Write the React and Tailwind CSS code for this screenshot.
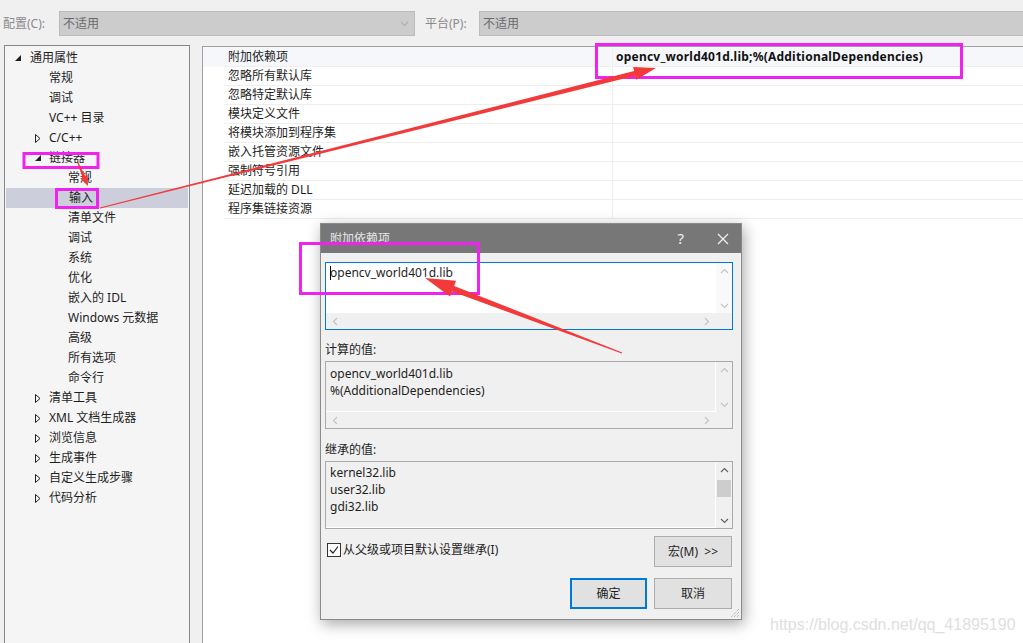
import React from "react";

const FONT = "font-['Noto_Sans','Noto_Sans_CJK_SC',sans-serif]";

function ExpTri() {
  return (
    <svg width="6" height="6" viewBox="0 0 6 6" className="block">
      <polygon points="6,0 6,6 0,6" fill="#1e1e1e" />
    </svg>
  );
}
function ColTri() {
  return (
    <svg width="6" height="9" viewBox="0 0 6 9" className="block">
      <polygon points="0.5,0.5 5,4.5 0.5,8.5" fill="none" stroke="#1e1e1e" strokeWidth="1" />
    </svg>
  );
}

function Chev({ dir, color = "#c2c2c2" }) {
  const pts = {
    up: "1,6 4.5,2.5 8,6",
    down: "1,3 4.5,6.5 8,3",
    left: "6,1 2.5,4.5 6,8",
    right: "3,1 6.5,4.5 3,8",
  }[dir];
  return (
    <svg width="9" height="9" viewBox="0 0 9 9" className="block">
      <polyline points={pts} fill="none" stroke={color} strokeWidth="1.1" />
    </svg>
  );
}

const tree = [
  { t: "通用属性", l: 0, s: "e" },
  { t: "常规", l: 1 },
  { t: "调试", l: 1 },
  { t: "VC++ 目录", l: 1 },
  { t: "C/C++", l: 1, s: "c" },
  { t: "链接器", l: 1, s: "e" },
  { t: "常规", l: 2 },
  { t: "输入", l: 2, sel: true },
  { t: "清单文件", l: 2 },
  { t: "调试", l: 2 },
  { t: "系统", l: 2 },
  { t: "优化", l: 2 },
  { t: "嵌入的 IDL", l: 2 },
  { t: "Windows 元数据", l: 2 },
  { t: "高级", l: 2 },
  { t: "所有选项", l: 2 },
  { t: "命令行", l: 2 },
  { t: "清单工具", l: 1, s: "c" },
  { t: "XML 文档生成器", l: 1, s: "c" },
  { t: "浏览信息", l: 1, s: "c" },
  { t: "生成事件", l: 1, s: "c" },
  { t: "自定义生成步骤", l: 1, s: "c" },
  { t: "代码分析", l: 1, s: "c" },
];

const props = [
  "附加依赖项",
  "忽略所有默认库",
  "忽略特定默认库",
  "模块定义文件",
  "将模块添加到程序集",
  "嵌入托管资源文件",
  "强制符号引用",
  "延迟加载的 DLL",
  "程序集链接资源",
];

function TreeRow({ item }) {
  const indent = item.l === 0 ? "pl-[10px]" : item.l === 1 ? "pl-[30px]" : "pl-[63px]";
  const tri = item.l === 0 ? "w-[15px]" : "w-[14px]";
  return (
    <div
      className={`flex items-center h-[20px] ${indent} ${
        item.sel ? "bg-[#cccedb] mx-[1px] pl-[62px]" : ""
      }`}
    >
      {item.l < 2 && (
        <div className={`${tri} flex items-center`}>
          {item.s === "e" && <ExpTri />}
          {item.s === "c" && <ColTri />}
        </div>
      )}
      <span className="text-[12px] leading-[20px] text-[#1e1e1e] whitespace-nowrap">{item.t}</span>
    </div>
  );
}

function arrowPoly(x1, y1, x2, y2, w0, w1, hl, hw) {
  const dx = x2 - x1,
    dy = y2 - y1;
  const len = Math.hypot(dx, dy);
  const ux = dx / len,
    uy = dy / len;
  const nx = -uy,
    ny = ux;
  const bx = x2 - ux * hl,
    by = y2 - uy * hl;
  const p = [
    [x1 + (nx * w0) / 2, y1 + (ny * w0) / 2],
    [bx + (nx * w1) / 2, by + (ny * w1) / 2],
    [bx + (nx * hw) / 2, by + (ny * hw) / 2],
    [x2, y2],
    [bx - (nx * hw) / 2, by - (ny * hw) / 2],
    [bx - (nx * w1) / 2, by - (ny * w1) / 2],
    [x1 - (nx * w0) / 2, y1 - (ny * w0) / 2],
  ];
  return p.map((q) => q[0].toFixed(1) + "," + q[1].toFixed(1)).join(" ");
}

function ScrollBox({ lines, white, hscroll = true, thumb, border = "border-[#a9a9a9]", pt = "pt-[2px]", arrowColor = "#c2c2c2" }) {
  return (
    <div
      className={`grid grid-cols-[1fr_16px] ${hscroll ? "grid-rows-[1fr_16px]" : "grid-rows-[1fr]"} border ${border} h-[68px] bg-[#f0f0f0]`}
    >
      <div className={`${white ? "bg-white" : "bg-[#f0f0f0] border-r border-b border-white"} pl-[4px] ${pt}`}>
        {lines.map((l, i) => (
          <div key={i} className="text-[12px] leading-[17px] text-[#1e1e1e] whitespace-nowrap">
            {l}
          </div>
        ))}
      </div>
      <div className={`flex flex-col ${white ? "bg-[#f7f7f7]" : "bg-[#f0f0f0]"}`}>
        <div className="h-[16px] flex items-center justify-center">
          <Chev dir="up" color={arrowColor} />
        </div>
        {thumb ? <div className="mt-[2px] h-[17px] mx-[1px] bg-[#cdcdcd]" /> : null}
        <div className="flex-1" />
        <div className="h-[16px] flex items-center justify-center">
          <Chev dir="down" color={arrowColor} />
        </div>
      </div>
      {hscroll && (
        <>
          <div className="flex items-center justify-between px-[5px] bg-[#f0f0f0]">
            <Chev dir="left" />
            <Chev dir="right" />
          </div>
          <div className="bg-[#f0f0f0]" />
        </>
      )}
    </div>
  );
}

export default function App() {
  const mag = "#f022f0";
  const red = "#f23a3a";
  return (
    <div className={`relative w-[1023px] h-[643px] overflow-hidden bg-[#f0f0f0] ${FONT}`}>
      {/* Top bar */}
      <div className="h-[45px] flex items-start pt-[11px]">
        <div className="w-[59px] pl-[3px] h-[25px] flex items-center text-[12px] text-[#8a8a8a]">配置(C):</div>
        <div className="w-[356px] h-[25px] bg-[#cccccc] border border-[#bcbcbc] flex items-center justify-between pl-[3px] pr-[5px]">
          <span className="text-[12px] text-[#6a6a6a]">不适用</span>
          <Chev dir="down" color="#b0b0b0" />
        </div>
        <div className="w-[64px] pl-[10px] h-[25px] flex items-center text-[12px] text-[#8a8a8a]">平台(P):</div>
        <div className="flex-1 h-[25px] bg-[#cccccc] border border-[#bcbcbc] border-r-0 flex items-center pl-[3px]">
          <span className="text-[12px] text-[#6a6a6a]">不适用</span>
        </div>
      </div>

      {/* Main */}
      <div className="flex h-[598px]">
        <div className="ml-[4px] w-[186px] border-l border-t border-r border-[#828790] bg-[#f5f5f5] pt-[2px]">
          {tree.map((it, i) => (
            <TreeRow key={i} item={it} />
          ))}
        </div>
        <div className="w-[12px]" />
        <div className="flex-1 mt-[1px] border-l border-t border-[#a0a0a0] bg-white">
          {props.map((p, i) => (
            <div key={i} className={`flex ${i === 0 ? "h-[20px] bg-[#f5f7fb]" : "h-[19px]"}`}>
              <div className="w-[21px]" />
              <div className="w-[389px] border-b border-r border-[#eeeeee] pl-[4px] flex items-center">
                <span className="text-[12px] text-[#1e1e1e] whitespace-nowrap">{p}</span>
              </div>
              <div className="flex-1 border-b border-[#eeeeee] pl-[3px] flex items-center">
                {i === 0 && (
                  <span className="text-[12px] font-bold tracking-[0.22px] text-[#111] whitespace-nowrap">
                    opencv_world401d.lib;%(AdditionalDependencies)
                  </span>
                )}
              </div>
            </div>
          ))}
        </div>
      </div>

      {/* Watermark */}
      <div className="absolute left-[770px] top-[615px] text-[16px] leading-[20px] text-[#e0e0e0] font-['Liberation_Sans',Arial,sans-serif] whitespace-nowrap">
        https://blog.csdn.net/qq_41895190
      </div>

      {/* Dialog */}
      <div className="absolute left-[320px] top-[223px] w-[422px] h-[397px] bg-[#f0f0f0] border border-[#8a8a8a] shadow-[2px_4px_14px_rgba(0,0,0,0.35)] flex flex-col">
        <div className="h-[29px] bg-[#777777] flex items-center pl-[9px] pr-[12px]">
          <span className="text-[12px] text-[#e6e6e6] flex-1">附加依赖项</span>
          <span className="text-[15px] text-[#f0f0f0] mr-[33px]">?</span>
          <svg width="12" height="12" viewBox="0 0 12 12">
            <path d="M1 1 L11 11 M11 1 L1 11" stroke="#f0f0f0" strokeWidth="1.2" />
          </svg>
        </div>
        <div className="pl-[4px] pr-[8px] flex flex-col">
          <div className="mt-[9px] border border-[#0078d7]">
            <div className="grid grid-cols-[1fr_16px] grid-rows-[50px_16px] h-[66px]">
              <div className="bg-white pl-[4px] pt-[1px] relative">
                <div className="text-[12px] leading-[17px] text-[#1e1e1e] whitespace-nowrap flex items-center">
                  <span className="inline-block w-[1px] h-[14px] bg-black -mr-[1px]" />
                  opencv_world401d.lib
                </div>
              </div>
              <div className="bg-[#f9f9f9] flex flex-col justify-between">
                <div className="h-[16px] flex items-center justify-center">
                  <Chev dir="up" />
                </div>
                <div className="h-[16px] flex items-center justify-center">
                  <Chev dir="down" />
                </div>
              </div>
              <div className="bg-[#f0f0f0] flex items-center justify-between px-[5px]">
                <Chev dir="left" />
                <Chev dir="right" />
              </div>
              <div className="bg-[#f0f0f0]" />
            </div>
          </div>

          <div className="mt-[10px] h-[19px] flex items-center text-[12px] text-[#1e1e1e]">计算的值:</div>
          <div className="mt-[2px]">
            <ScrollBox lines={["opencv_world401d.lib", "%(AdditionalDependencies)"]} pt="pt-[3px]" />
          </div>

          <div className="mt-[11px] h-[19px] flex items-center text-[12px] text-[#1e1e1e]">继承的值:</div>
          <div className="mt-[2px]">
            <ScrollBox
              lines={["kernel32.lib", "user32.lib", "gdi32.lib"]}
              hscroll={false}
              thumb
              arrowColor="#606060"
            />
          </div>

          <div className="mt-[7px] flex items-start justify-between">
            <div className="flex items-center mt-[5px] ml-[2px]">
              <div className="w-[14px] h-[14px] border border-[#333] bg-white flex items-center justify-center">
                <svg width="10" height="10" viewBox="0 0 10 10">
                  <polyline points="1,5 4,8 9,1.5" fill="none" stroke="#222" strokeWidth="1.2" />
                </svg>
              </div>
              <span className="ml-[2px] text-[12px] text-[#1e1e1e]">从父级或项目默认设置继承(I)</span>
            </div>
            <div className="w-[78px] h-[31px] bg-[#e1e1e1] border border-[#adadad] flex items-center justify-center text-[12px] text-[#1e1e1e] mr-[1px]">
              宏(M)&nbsp;&nbsp;&gt;&gt;
            </div>
          </div>

          <div className="mt-[11px] flex justify-end gap-[7px] mr-[1px]">
            <div className="w-[77px] h-[31px] bg-[#e1e1e1] border-2 border-[#0078d7] flex items-center justify-center text-[12px] text-[#1e1e1e]">
              确定
            </div>
            <div className="w-[78px] h-[31px] bg-[#e1e1e1] border border-[#adadad] flex items-center justify-center text-[12px] text-[#1e1e1e]">
              取消
            </div>
          </div>
        </div>
        <svg className="absolute right-[1px] bottom-[1px]" width="11" height="11" viewBox="0 0 11 11">
          <path d="M10 2 L2 10 M10 5 L5 10 M10 8 L8 10" stroke="#a0a0a0" strokeWidth="1" strokeDasharray="1 1" />
        </svg>
      </div>

      {/* Annotations */}
      <svg className="absolute inset-0 pointer-events-none" width="1023" height="643" viewBox="0 0 1023 643">
        <rect x="596.5" y="44.5" width="365" height="33" fill="none" stroke={mag} strokeWidth="3" />
        <rect x="24" y="153.5" width="74" height="14" fill="none" stroke={mag} strokeWidth="3" />
        <rect x="56.5" y="189.5" width="41" height="18" fill="none" stroke={mag} strokeWidth="3" />
        <rect x="300.5" y="243.5" width="178" height="50" fill="none" stroke={mag} strokeWidth="3" />
        <polygon points={arrowPoly(100, 208, 656, 68, 1, 5, 22, 13)} fill={red} />
        <polygon points={arrowPoly(78, 163, 88, 186, 1, 3, 10, 8)} fill={red} />
        <polygon points={arrowPoly(622, 353, 425, 278, 1, 6, 30, 17)} fill={red} />
      </svg>
    </div>
  );
}
